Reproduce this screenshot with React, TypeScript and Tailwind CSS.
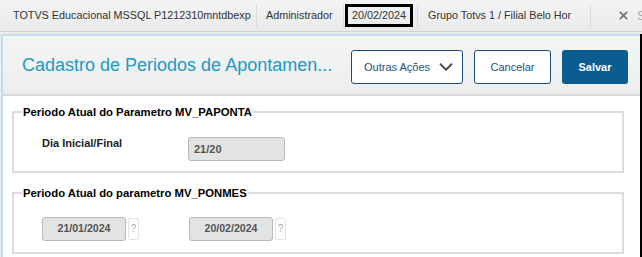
import { ChevronDown, X } from 'lucide-react'

const Sep = () => <div className="w-px h-[22px] shrink-0 bg-[#d9dbdc]" />

export default function App() {
  return (
    <div className="w-[642px] h-[257px] overflow-hidden bg-[#eceded] [font-family:'Liberation_Sans',Arial,sans-serif] text-[#333] whitespace-nowrap">
      {/* top bar */}
      <div className="h-[32px] flex items-center text-[10.8px] bg-gradient-to-b from-[#f3f4f4] to-[#e9eaeb] border-b border-[#cfd1d2]">
        <span className="shrink-0 w-[256px] pl-[13px]">TOTVS Educacional MSSQL P1212310mntdbexp</span>
        <Sep />
        <span className="shrink-0 w-[86px] pl-[9px]">Administrador</span>
        <Sep />
        <span className="shrink-0 ml-[1px] w-[68px] h-[23px] flex items-center justify-center border-[3px] border-black">20/02/2024</span>
        <div className="w-[4px] shrink-0" />
        <Sep />
        <span className="shrink-0 w-[172px] pl-[10px]">Grupo Totvs 1 / Filial Belo Hor</span>
        <Sep />
        <span className="shrink-0 pl-[26px] flex items-center gap-[7px] text-[#aaa] text-[12px]">
          <X size={13} strokeWidth={3} className="text-[#6b6b6b]" />S
        </span>
      </div>

      {/* modal */}
      <div className="mt-[2px] ml-[1px] w-[641px] h-[223px] flex flex-col border-l-2 border-l-[#c9daea] border-r-2 border-r-black bg-white">
        <div className="h-[62px] shrink-0 flex items-center pt-[4px] border-t-2 border-t-[#c6dcef] border-b-2 border-b-[#d8d9da] bg-gradient-to-b from-[#f4f5f5] to-[#eceded]">
          <h1 className="shrink-0 pl-[19px] text-[18px] text-[#1b9ac6] w-[348px] -mt-[4px]">Cadastro de Periodos de Apontamen...</h1>
          <button className="shrink-0 w-[112px] h-[34px] flex items-center justify-between pl-[12px] pr-[5px] border border-[#1c4d78] rounded-[3px] bg-white text-[11px] text-[#1b4f7c]">
            Outras Ações
            <ChevronDown size={22} strokeWidth={2} className="text-[#4a4a4a]" />
          </button>
          <button className="shrink-0 ml-[11px] w-[77px] h-[34px] border border-[#1c4d78] rounded-[3px] bg-white text-[11px] text-[#1b4f7c]">
            Cancelar
          </button>
          <button className="shrink-0 ml-[11px] w-[66px] h-[34px] rounded-[3px] bg-[#0b5c8f] text-[11px] font-bold text-white">
            Salvar
          </button>
        </div>

        <div className="px-[9px] pt-[8px] text-[11px] text-black">
          <fieldset className="w-[612px] h-[69px] border-2 border-[#dcdcdc] pl-[8px]">
            <legend className="px-[1px] font-bold text-[11.3px]">Periodo Atual do Parametro MV_PAPONTA</legend>
            <div className="flex items-start pt-[16px]">
              <span className="-mt-[2px] pl-[20px] w-[166px] font-bold text-[#222]">Dia Inicial/Final</span>
              <div className="w-[97px] h-[24px] flex items-center pl-[5px] rounded-[3px] border border-[#b9b9b9] bg-[#e2e3e3] font-bold text-[#555]">21/20</div>
            </div>
          </fieldset>

          <fieldset className="mt-[12px] w-[612px] h-[69px] border-2 border-[#dcdcdc] pl-[8px]">
            <legend className="px-[1px] font-bold text-[11.3px]">Periodo Atual do parametro MV_PONMES</legend>
            <div className="flex items-center pt-[15px] pl-[20px]">
              <div className="w-[84px] h-[24px] flex items-center justify-center rounded-[3px] border border-[#b9b9b9] bg-[#e2e3e3] font-bold text-[#555] text-[10.6px]">21/01/2024</div>
              <div className="ml-[2px] w-[11px] h-[22px] flex items-center justify-center border border-[#e3e3e3] rounded-[2px] text-[10px] text-[#aaa]">?</div>
              <div className="ml-[50px] w-[84px] h-[24px] flex items-center justify-center rounded-[3px] border border-[#b9b9b9] bg-[#e2e3e3] font-bold text-[#555] text-[10.6px]">20/02/2024</div>
              <div className="ml-[2px] w-[11px] h-[22px] flex items-center justify-center border border-[#e3e3e3] rounded-[2px] text-[10px] text-[#aaa]">?</div>
            </div>
          </fieldset>
        </div>
      </div>
    </div>
  )
}
